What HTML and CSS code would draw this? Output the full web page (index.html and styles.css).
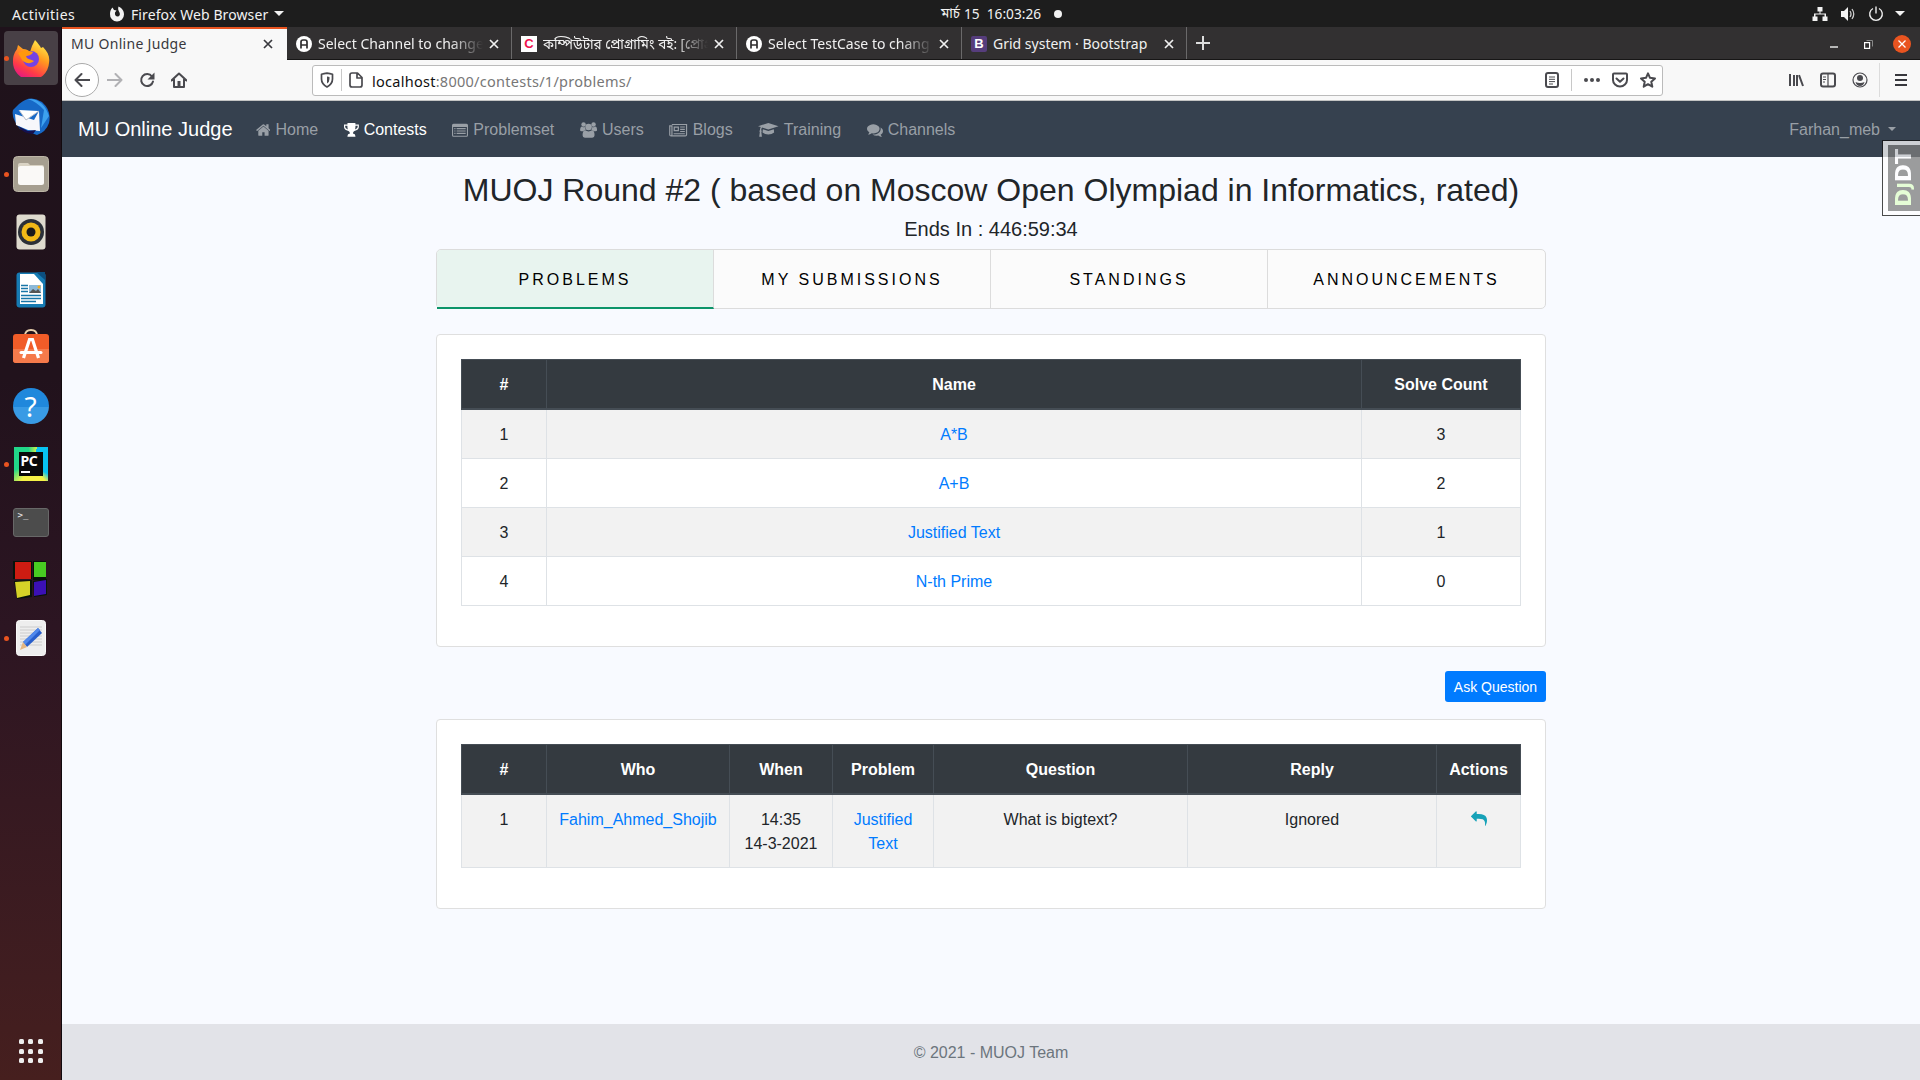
FILE: index.html
```html
<!DOCTYPE html>
<html lang="en">
<head>
<meta charset="utf-8">
<title>MU Online Judge</title>
<link rel="stylesheet" href="styles.css">
</head>
<body>
<header class="topbar">
  <span class="activities">Activities</span>
  <svg class="fx-mono" width="16" height="16" viewBox="0 0 16 16"><path d="M8 15.500A7 7 0 0 1 1 8C1 5 2 3 3.500 1.500L5 4L7.500 4.500L6 6.500C5.500 9 7 10.500 8.500 10.500C10.500 10.500 11.500 8.500 10.500 6.500C10 5 8.500 4 9.500.5C13.500 2.500 15 5 15 8.500A7 7 0 0 1 8 15.500Z" fill="#f2f2f2"/></svg>
  <span class="appname">Firefox Web Browser</span>
  <i class="caret-down"></i>
  <div class="clock"><span class="bn month">মার্চ</span><span>15&nbsp; 16:03:26</span><i class="notif"></i></div>
  <div class="status">
    <svg width="16" height="16" viewBox="0 0 16 16" fill="#f2f2f2"><path d="M5.500 1h5v4.500h-2v2h5.500v3h1.500V15h-5v-4.500h2V8.500h-9v2h2V15h-5v-4.500H2v-3h5.500v-2h-2z"/></svg>
    <svg width="16" height="16" viewBox="0 0 16 16"><path d="M1 5h3l4-4v14l-4-4H1z" fill="#f2f2f2"/><path d="M10 5q2 3 0 6M12 3q3.500 5 0 10" fill="none" stroke="#ccc" stroke-width="1.300"/></svg>
    <svg width="16" height="16" viewBox="0 0 16 16"><path d="M5 2.500a6.300 6.300 0 1 0 6 0M8 .5v7" fill="none" stroke="#eee" stroke-width="1.400"/></svg>
    <i class="caret-down"></i>
  </div>
</header>
<div class="desktop">
<aside class="dock">
  <div class="slot active running"><svg width="38" height="38" viewBox="0 0 38 38"><defs><linearGradient id="ff" x1=".8" y1="0" x2=".3" y2="1"><stop offset="0" stop-color="#fff44f"/><stop offset=".4" stop-color="#ff9a1f"/><stop offset=".75" stop-color="#ff3b47"/><stop offset="1" stop-color="#e31587"/></linearGradient></defs><path d="M23 1c3 3 5 6 6 8l2-1c5 5 7 10 6 16a18 18 0 0 1-36-2c0-6 2-9 4-12l1-4 5 4c3 0 5 1 7 3l2-6z" fill="url(#ff)"/><circle cx="19" cy="20" r="8" fill="#7542e5"/><path d="M6 14l7-3 8 2c-1 3-5 4-7 4 1 4 5 3 8 5-4 4-11 2-13-3z" fill="#ff980e"/></svg></div>
  <div class="slot"><svg width="38" height="38" viewBox="0 0 38 38"><path d="M7 7Q18-3 30 5Q40 14 37 26Q34 35 25 38L8 32Q-1 21 1 13z" fill="#1769c7"/><path d="M16 2q15-1 21 17l-8 12 3-18q-7-8-16-11z" fill="#3da1ef"/><path d="M3 17l19 6 5-9 1 20-12-1-12-5z" fill="#f7f7fb"/><path d="M7 13l7 10 13-9" fill="#fff" stroke="#b8bcc8"/><path d="M6 29l10 5 8-1-3 4Q10 36 6 29z" fill="#15104e"/></svg></div>
  <div class="slot running"><svg width="36" height="36" viewBox="0 0 36 36"><rect x=".5" y=".5" width="35" height="35" rx="4" fill="#a69f90" stroke="#bdb6a7"/><path d="M5 9q0-2 2-2h8l2 2h12q2 0 2 2v7H5z" fill="#d9d3c4"/><rect x="5" y="10" width="26" height="19" rx="2.500" fill="#faf9f7"/></svg></div>
  <div class="slot"><svg width="30" height="36" viewBox="0 0 30 36"><rect x=".5" y=".5" width="29" height="35" rx="3" fill="#dedace"/><circle cx="15" cy="18" r="13" fill="#2b3038"/><circle cx="15" cy="18" r="9.500" fill="#f1b917"/><circle cx="15" cy="18" r="4.500" fill="#17191c"/></svg></div>
  <div class="slot"><svg width="30" height="36" viewBox="0 0 30 36"><rect x=".5" y=".5" width="29" height="35" rx="3" fill="#167bb3"/><path d="M4 2h14l9 10v20H4z" fill="#fff"/><path d="M20 0h9v8z" fill="#0b4f80"/><path d="M5 13.500h7M5 16.500h7M5 19.500h7M5 23.500h20M5 26.500h20M5 29.500h15" stroke="#1976a8" stroke-width="1.300"/><rect x="13" y="13" width="12" height="8" fill="#8cb9d8"/><path d="M13 21l4-4 3 2 2-2 3 4z" fill="#555"/><circle cx="23" cy="15" r="1.500" fill="#f9ad16"/></svg></div>
  <div class="slot software"><svg width="36" height="36" viewBox="0 0 36 36"><path d="M12 7q0-6 6-6t6 6" fill="none" stroke="#ead2ae" stroke-width="1.800"/><rect y="5" width="36" height="29" rx="3" fill="#f15c28"/><path d="M0 20h36v11q0 3-3 3H3q-3 0-3-3z" fill="#f57a4b"/><path d="M10.500 29L16.500 10.500h3L25.500 29" fill="none" stroke="#fff" stroke-width="3.200"/><path d="M8 23.500h20" stroke="#fff" stroke-width="3" stroke-linecap="round"/></svg></div>
  <div class="slot"><div class="help">?</div></div>
  <div class="slot running"><div class="pycharm"><div class="pc-core">PC<i></i></div></div></div>
  <div class="slot"><div class="terminal">&gt;_</div></div>
  <div class="slot"><svg width="36" height="38" viewBox="0 0 36 38"><path d="M0 0h19v18H0zM20 0h13v19H20zM1 20l18-1v17L4 38zM20 20l14-2v16l-13 2z" fill="#07120a"/><path d="M2 1h16v17H2z" fill="#ce1c12"/><path d="M21 1h12v15H21z" fill="#48cc22"/><path d="M2 21l15-1v14L4 37z" fill="#d6d228"/><path d="M21 21l12-2v14l-12 2z" fill="#3b10b5"/></svg></div>
  <div class="slot running"><svg width="30" height="36" viewBox="0 0 30 36"><rect x=".5" y=".5" width="29" height="35" rx="3" fill="#eee" stroke="#f9f9f9"/><path d="M4 7h22M4 10h22M4 13h22M4 16h22M4 19h22M4 22h22M4 25h22" stroke="#ccc"/><path d="M22 8l4 5-15 14-4-5z" fill="#285ecb"/><path d="M22 8l2 2-15 15-2-3z" fill="#5088ec"/><path d="M7 22l4 5-7 3z" fill="#e4b681"/></svg></div>
  <div class="apps"><i></i><i></i><i></i><i></i><i></i><i></i><i></i><i></i><i></i></div>
</aside>
<div class="window">
  <div class="tabstrip">
    <div class="tab current"><span class="tt">MU Online Judge</span><svg class="x" viewBox="0 0 10 10"><path d="M1 1l8 8M9 1l-8 8"/></svg></div>
    <div class="tab"><svg class="fav" viewBox="0 0 16 16"><circle cx="8" cy="8" r="8" fill="#fff"/><path d="M5 12.500V6q0-2 2-2h2q2 0 2 2v6.500M5 9h6" fill="none" stroke="#302e2f" stroke-width="1.700"/></svg><span class="tt fade">Select Channel to change</span><svg class="x" viewBox="0 0 10 10"><path d="M1 1l8 8M9 1l-8 8"/></svg></div>
    <div class="tab"><span class="fav fav-c">C</span><span class="tt fade bn">কম্পিউটার প্রোগ্রামিং বই: [প্রোগ্রা</span><svg class="x" viewBox="0 0 10 10"><path d="M1 1l8 8M9 1l-8 8"/></svg></div>
    <div class="tab"><svg class="fav" viewBox="0 0 16 16"><circle cx="8" cy="8" r="8" fill="#fff"/><path d="M5 12.500V6q0-2 2-2h2q2 0 2 2v6.500M5 9h6" fill="none" stroke="#302e2f" stroke-width="1.700"/></svg><span class="tt fade">Select TestCase to chang</span><svg class="x" viewBox="0 0 10 10"><path d="M1 1l8 8M9 1l-8 8"/></svg></div>
    <div class="tab"><span class="fav fav-b">B</span><span class="tt">Grid system · Bootstrap</span><svg class="x" viewBox="0 0 10 10"><path d="M1 1l8 8M9 1l-8 8"/></svg></div>
    <svg class="plus" width="14" height="14" viewBox="0 0 14 14"><path d="M7 0v14M0 7h14" stroke="#ddd" stroke-width="2"/></svg>
    <div class="controls">
      <svg width="8" height="12" viewBox="0 0 8 12"><path d="M0 9h8" stroke="#fff" stroke-width="1.300"/></svg>
      <svg width="9" height="9" viewBox="0 0 9 9"><path d="M.6 2.600h5v5.800h-5z" fill="none" stroke="#fff" stroke-width="1.200"/><path d="M2.500.5h6v6" fill="none" stroke="#888"/></svg>
      <svg width="18" height="18" viewBox="0 0 18 18"><circle cx="9" cy="9" r="9" fill="#e95420"/><path d="M5.500 5.500l7 7M12.500 5.500l-7 7" stroke="#fff" stroke-width="1.300"/></svg>
    </div>
  </div>
  <div class="toolbar">
    <div class="navbtns">
      <span class="back"><svg width="16" height="16" viewBox="0 0 16 16"><path d="M15.500 8H1.500M7.500 2l-6 6 6 6" class="ln"/></svg></span>
      <svg width="16" height="16" viewBox="0 0 16 16" opacity=".4"><path d="M.5 8h14M8.500 2l6 6-6 6" class="ln"/></svg>
      <svg width="16" height="16" viewBox="0 0 16 16"><path d="M13 4.500A6 6 0 1 0 14 9.500" class="ln"/><path d="M15.500.5v7h-7z" fill="#4a4a4f"/></svg>
      <svg width="16" height="16" viewBox="0 0 16 16"><path d="M.5 8.500L8 1.500l7.500 7M3 7.500V15h10V7.500" class="ln"/><path d="M6.500 9h3v6h-3z" fill="#4a4a4f"/></svg>
    </div>
    <div class="urlbar">
      <svg width="14" height="16" viewBox="0 0 14 16"><path d="M7 1.200q3 .3 5.500 1v4.800Q12.500 12 7 15Q1.500 12 1.500 7V2.200Q4 1.500 7 1.200z" class="ln thin"/><path d="M7 4.500q1.500 0 2.500.5v2q0 3-2.500 4.500z" fill="#4a4a4f"/></svg>
      <i class="sep"></i>
      <svg width="14" height="16" viewBox="0 0 14 16"><path d="M3 1h5.500L13 5.500V13q0 2-2 2H3q-2 0-2-2V3q0-2 2-2zM8 1v5h5" class="ln thin"/></svg>
      <span class="url"><b>localhost</b>:8000/contests/1/problems/</span>
      <div class="urlicons">
        <svg width="14" height="16" viewBox="0 0 14 16"><rect x="1" y="1" width="12" height="14" rx="2" class="ln"/><path d="M4 5h6M4 7.300h6M4 9.600h6M4 12h4" stroke="#4a4a4f"/></svg>
        <i class="sep"></i>
        <svg width="16" height="16" viewBox="0 0 16 16" fill="#4a4a4f"><circle cx="2" cy="8" r="2"/><circle cx="8" cy="8" r="2"/><circle cx="14" cy="8" r="2"/></svg>
        <svg width="16" height="16" viewBox="0 0 16 16"><path d="M1 2.500q0-1 1-1h12q1 0 1 1V8a7 6.500 0 0 1-14 0zM4.500 6.500L8 9.800l3.500-3.300" class="ln"/></svg>
        <svg width="16" height="16" viewBox="0 0 16 16"><path d="M8 1.300l2 4.500 5 .6-3.700 3.300 1 5L8 12.200l-4.300 2.500 1-5L1 6.400l5-.6z" class="ln"/></svg>
      </div>
    </div>
    <div class="rightbtns">
      <svg width="16" height="16" viewBox="0 0 16 16"><path d="M2 2v12M6 3v11M9 3v11M11 3.200L15 14" fill="none" stroke="#4a4a4f" stroke-width="2"/></svg>
      <svg width="16" height="16" viewBox="0 0 16 16"><rect x="1" y="1.500" width="14" height="13" rx="2" class="ln"/><path d="M8 2v12M3 5h3M3 7.500h3M3 10h2" stroke="#4a4a4f" stroke-width="1.200"/></svg>
      <svg width="16" height="16" viewBox="0 0 16 16"><circle cx="8" cy="8" r="7" class="ln hair"/><circle cx="8" cy="6" r="3" fill="#4a4a4f"/><path d="M3.500 10q4.500 2 9 0-1 4-4.500 4t-4.500-4z" fill="#4a4a4f"/></svg>
      <i class="sep tall"></i>
      <svg width="14" height="14" viewBox="0 0 14 14"><path d="M1 2h12M1 7h12M1 12h12" stroke="#38383d" stroke-width="2"/></svg>
    </div>
  </div>
  <div class="page">
    <nav class="navbar">
      <span class="brand">MU Online Judge</span>
      <a><svg width="14.860" height="16" viewBox="64 0 1664 1792"><path d="M1472 992v480q0 26-19 45t-45 19h-384v-384h-256v384h-384q-26 0-45-19t-19-45v-480q0-1 .5-3t.5-3l575-474 575 474q1 2 1 6zm223-69l-62 74q-8 9-21 11h-3q-13 0-21-7l-692-577-692 577q-12 8-24 7-13-2-21-11l-62-74q-8-10-7-23.500t11-21.500l719-599q32-26 76-26t76 26l244 204v-195q0-14 9-23t23-9h192q14 0 23 9t9 23v408l219 182q10 8 11 21.500t-7 23.500z"/></svg>Home</a>
      <a class="on"><svg width="14.860" height="16" viewBox="0 0 15 16"><path d="M3.500 1h8v1.500H15V5q0 3-4.500 4Q9 10 9 11.500q2.500.5 2.500 2.500v.8h-8V14q0-2 2.500-2.500Q6 10 4.500 9 0 8 0 5V2.500h3.500zM1.200 3.700V5q0 1.500 2.700 2.500-.5-1.500-.5-3.800zM13.800 3.700h-2.200q0 2.300-.5 3.800Q13.800 6.500 13.800 5z" fill-rule="evenodd"/></svg>Contests</a>
      <a><svg width="16" height="16" viewBox="0 0 16 16"><path d="M1.500 1.800h13q1.500 0 1.500 1.500v10q0 1.500-1.500 1.500h-13Q0 14.800 0 13.300v-10q0-1.500 1.500-1.500zM1.100 5v8.200q0 .5.500.5h12.800q.5 0 .5-.5V5zM2.300 6h1.200v1.200H2.300zM4.600 6h9.100v1.200H4.600zM2.300 8.400h1.200v1.200H2.300zM4.600 8.400h9.100v1.200H4.600zM2.300 10.800h1.200V12H2.300zM4.600 10.800h9.100V12H4.600z" fill-rule="evenodd"/></svg>Problemset</a>
      <a><svg width="17.140" height="16" viewBox="0 0 17 16"><circle cx="3.500" cy="2.500" r="2.200"/><circle cx="13.500" cy="2.500" r="2.200"/><circle cx="8.500" cy="5" r="3.300"/><path d="M1.500 4.500q2 1.300 3.300.2Q4.800 7 5.800 8 4 8 3.200 9.200H1.500Q0 9.200 0 8q0-3 1.500-3.500zM15.500 4.500q-2 1.300-3.300.2Q12.200 7 11.200 8q1.800 0 2.600 1.200h1.700Q17 9.200 17 8q0-3-1.500-3.500zM5 8.300q3.500 2.200 7 0 2.500.7 2.500 5 0 2.400-2.300 2.400H4.800q-2.300 0-2.300-2.400 0-4.300 2.500-5z"/></svg>Users</a>
      <a><svg width="18.300" height="16" viewBox="0 0 18 16"><path d="M2.700 2.500h14.700v10.200q0 1.200-1.200 1.200H1.900q-1.300 0-1.300-1.200V3.800h2.200v9q0 1-.9 1" fill="none" stroke="currentColor" stroke-width="1.200"/><path d="M4.500 4.500h5.300v4.800H4.500zM5.700 5.700v2.400h2.900V5.700zM11 4.500h4.700v1.100H11zM11 6.800h4.700v1.100H11zM11 9h4.700v1.100H11zM4.500 11.200h11.200v1.100H4.500z" fill-rule="evenodd"/></svg>Blogs</a>
      <a><svg width="20.570" height="16" viewBox="0 0 20.500 16"><path d="M10.300 1L20.500 4.200 10.300 7.500 4 5.500Q3.200 6.500 3.200 8.200q1 .8.100 1.700l.6 4.900H1.200l.6-4.900q-.9-1 .1-1.700 0-1.900.8-3.200L0 4.200zM4.800 7.200l5.500 1.700 5.500-1.700.3 3.300q-2.300 2-5.800 2t-5.800-2z"/></svg>Training</a>
      <a><svg width="16" height="16" viewBox="0 0 1792 1792"><path d="M1408 768q0 139-94 257t-256.500 186.500-353.500 68.500q-86 0-176-16-124 88-278 128-36 9-86 16h-3q-11 0-20.500-8t-11.500-21q-1-3-1-6.500t.5-6.500 2-6l2.500-5 3.500-5.500 4-5 4.500-5 4-4.500q5-6 23-25t26-29.500 22.500-29 25-38.500 20.500-44q-124-72-195-177t-71-224q0-139 94-257t256.500-186.500 353.500-68.500 353.500 68.500 256.500 186.500 94 257zm384 256q0 120-71 224.500t-195 176.500q10 24 20.500 44t25 38.500 22.500 29 26 29.500 23 25q1 1 4 4.500t4.500 5 4 5 3.500 5.500l2.500 5 2 6 .5 6.500-1 6.500q-3 14-13 22t-22 7q-50-7-86-16-154-40-278-128-90 16-176 16-271 0-472-132 58 4 88 4 161 0 309-45t264-129q125-92 192-212t67-254q0-77-23-152 129 71 204 178t75 230z"/></svg>Channels</a>
      <a class="user">Farhan_meb<i class="drop"></i></a>
    </nav>
    <main class="container">
      <h2>MUOJ Round #2 ( based on Moscow Open Olympiad in Informatics, rated)</h2>
      <h5>Ends In : 446:59:34</h5>
      <div class="menu">
        <a class="sel">PROBLEMS</a><a>MY SUBMISSIONS</a><a>STANDINGS</a><a>ANNOUNCEMENTS</a>
      </div>
      <section class="card">
        <table>
          <colgroup><col class="c-num"><col><col class="c-solve"></colgroup>
          <thead><tr><th>#</th><th>Name</th><th>Solve Count</th></tr></thead>
          <tbody>
            <tr><td>1</td><td><a>A*B</a></td><td>3</td></tr>
            <tr><td>2</td><td><a>A+B</a></td><td>2</td></tr>
            <tr><td>3</td><td><a>Justified Text</a></td><td>1</td></tr>
            <tr><td>4</td><td><a>N-th Prime</a></td><td>0</td></tr>
          </tbody>
        </table>
      </section>
      <div class="ask"><button>Ask Question</button></div>
      <section class="card">
        <table>
          <colgroup><col class="c-num"><col class="c-who"><col class="c-when"><col class="c-prob"><col class="c-ques"><col class="c-reply"><col></colgroup>
          <thead><tr><th>#</th><th>Who</th><th>When</th><th>Problem</th><th>Question</th><th>Reply</th><th>Actions</th></tr></thead>
          <tbody><tr><td>1</td><td><a>Fahim_Ahmed_Shojib</a></td><td>14:35<br>14-3-2021</td><td><a>Justified<br>Text</a></td><td>What is bigtext?</td><td>Ignored</td><td><svg class="reply" width="16" height="16" viewBox="0 0 1792 1792"><path d="M1792 1120q0 166-127 451-3 7-10.500 24t-13.500 30-13 22q-12 17-28 17-15 0-23.500-10t-8.500-25q0-9 2.500-26.500t2.500-23.500q5-68 5-123 0-420-270-531-180-67-444-67h-224v256q0 26-19 45t-45 19-45-19l-512-512q-19-19-19-45t19-45l512-512q19-19 45-19t45 19 19 45v256h224q713 0 875 403 53 134 53 333z" fill="#17a2b8"/></svg></td></tr></tbody>
        </table>
      </section>
    </main>
    <footer>© 2021 - MUOJ Team</footer>
    <div class="djdt"><div class="djdt-in"><span><em>D<small>J</small></em>DT</span></div></div>
  </div>
</div>
</div>
</body>
</html>
```

FILE: styles.css
```css
* { box-sizing: border-box; }
body {
  margin: 0; width: 1920px; height: 1080px; overflow: hidden;
  display: flex; flex-direction: column;
  font-family: "Liberation Sans", Arial, sans-serif; font-size: 16px; line-height: 1.5; color: #212529;
}
svg { display: block; flex: none; }
.bn { font-family: "Noto Sans", "Noto Sans Bengali", sans-serif; }

/* desktop top bar */
.topbar {
  height: 27px; background: #1d1d1d; color: #f2f2f2; flex: none;
  display: flex; align-items: center; position: relative; padding-left: 12px;
  font: 14px/27px "Noto Sans", sans-serif; white-space: nowrap;
}
.activities { width: 97px; letter-spacing: .5px; padding-top: 1px; }
.appname { margin-left: 6px; width: 138px; padding-top: 1px; letter-spacing: .1px; }
.caret-down { border: 5px solid transparent; border-top: 5px solid #f2f2f2; border-bottom: 0; margin-left: 5px; }
.clock { position: absolute; left: 941px; top: 0; display: flex; align-items: center; font-size: 13.700px; }
.month { width: 23px; font-size: 13.500px; }
.notif { width: 8px; height: 8px; border-radius: 50%; background: #f2f2f2; margin-left: 13px; }
.status { margin-left: auto; display: flex; align-items: center; gap: 12px; padding-right: 15px; }
.status .caret-down { margin-left: -1px; }

.desktop { display: flex; flex: 1; min-height: 0; }

/* launcher */
.dock {
  width: 62px; flex: none; padding-top: 2px; display: flex; flex-direction: column; align-items: center;
  background: linear-gradient(#1f121b 0, #21121c 350px, #2c1522 600px, #401d20 950px, #461f1e 100%);
  border-right: 1px solid #120a0e;
}
.slot { width: 54px; height: 58px; display: flex; align-items: center; justify-content: center; position: relative; }
.slot.active { isolation: isolate; }
.slot.active::before { content: ""; position: absolute; inset: 2px 0; border-radius: 4px; background: #484046; z-index: -1; }
.slot.running::after { content: ""; position: absolute; left: 0; top: 27px; width: 5px; height: 5px; border-radius: 50%; background: #e95420; }
.slot.software { padding-bottom: 2px; }
.help { width: 36px; height: 36px; border-radius: 50%; background: linear-gradient(#2088dc 52%, #399be5 52%); color: #fff; font: 28px/36px "Noto Sans", sans-serif; text-align: center; }
.pycharm { width: 34px; height: 34px; padding: 5px; background: conic-gradient(from 20deg, #07c3f2 0 100deg, #f5f246 120deg 190deg, #21d789 230deg 330deg, #c8f04d 360deg); }
.pc-core { width: 24px; height: 24px; background: #0a0a0a; color: #fff; font: bold 14px/17px "Noto Sans", sans-serif; padding-left: 2px; letter-spacing: -.5px; }
.pc-core i { display: block; width: 9px; height: 2px; background: #fff; margin-top: 2px; }
.terminal { width: 36px; height: 29px; border: 1px solid #686868; border-radius: 3px; background: #4c4c4c; color: #eee; font: 9px/12px "DejaVu Sans Mono", monospace; padding-left: 4px; }
.apps { margin-top: auto; margin-bottom: 17px; display: grid; grid-template-columns: repeat(3, 5px); gap: 4.500px; }
.apps i { width: 5px; height: 5px; border-radius: 1.500px; background: #eee; }

/* browser chrome */
.window { flex: 1; min-width: 0; display: flex; flex-direction: column; }
.tabstrip { height: 33px; flex: none; display: flex; background: #323031; border-bottom: 1px solid #171616; align-items: stretch; }
.tab { width: 225px; display: flex; align-items: center; padding: 1px 12px 0 9px; gap: 6px; color: #f0f0f0; border-right: 1px solid #6a696a; font: 14px/20px "Noto Sans", sans-serif; white-space: nowrap; }
.tab.current { height: 33px; background: #f8f8f8; color: #38383d; border-top: 2px solid #e95420; border-right: 0; padding: 0 14px 2px 9px; letter-spacing: .3px; }
.tt { flex: 1; overflow: hidden; }
.tt.bn { font-size: 13.500px; }
.fade { -webkit-mask-image: linear-gradient(90deg, #000 80%, transparent); mask-image: linear-gradient(90deg, #000 80%, transparent); }
.x { width: 10px; height: 10px; stroke: currentColor; stroke-width: 1.700; }
.fav { width: 16px; height: 16px; flex: none; font: bold 13px/16px "Liberation Sans", sans-serif; text-align: center; }
.fav-c { background: #fff; color: #f0134d; }
.fav-b { background: #563d7c; color: #fff; border-radius: 2px; }
.plus { margin: 9px 0 0 9px; }
.controls { margin-left: auto; display: flex; align-items: center; gap: 20px; padding: 2px 9px 0 0; }
.controls svg:first-child { margin-right: 6px; }
.toolbar { height: 41px; flex: none; display: flex; align-items: center; background: #f8f8f8; border-bottom: 1px solid #c4c4c4; padding: 0 12px 0 3px; }
.ln { fill: none; stroke: #4a4a4f; stroke-width: 2; stroke-linecap: round; stroke-linejoin: round; }
.ln.thin { stroke-width: 1.700; }
.ln.hair { stroke-width: 1.200; }
.navbtns { display: flex; align-items: center; gap: 16px; width: 247px; }
.back { width: 34px; height: 34px; margin-right: -8px; border: 1px solid #aaa; border-radius: 50%; background: #fff; display: flex; align-items: center; justify-content: center; }
.urlbar { width: 1351px; height: 31px; border: 1px solid #bbb; border-radius: 3px; background: #fff; display: flex; align-items: center; padding: 0 6px 0 7px; gap: 7px; }
.sep { width: 1px; height: 22px; background: #c8c8c8; }
.sep.tall { height: 34px; background: #dcdcdc; }
.url { font: 14.500px/20px "Noto Sans", sans-serif; letter-spacing: .27px; color: #777; margin-left: 2px; padding-top: 1px; }
.url b { font-weight: normal; color: #111; }
.urlicons { margin-left: auto; display: flex; align-items: center; gap: 12px; }
.rightbtns { margin-left: auto; display: flex; align-items: center; gap: 16px; }
.rightbtns .sep { margin: 0 -2px 0 -5px; }

/* web page */
.page { flex: 1; min-height: 0; background: #f8faff; position: relative; display: flex; flex-direction: column; }
.navbar { height: 56px; flex: none; background: #36414f; display: flex; align-items: center; padding: 0 24px 0 16px; color: #999fa6; }
.brand { color: #fff; font-size: 20px; margin-right: 23px; }
.navbar a { display: flex; align-items: center; gap: 5.100px; margin-right: 25.500px; padding-top: 2px; }
.navbar a svg { fill: currentColor; margin-top: -1px; }
.navbar a.on { color: #fff; }
.navbar a.user { margin: 0 0 0 auto; gap: 8px; }
.drop { border: 4.500px solid transparent; border-top-color: currentColor; border-bottom: 0; margin-top: -2px; }
.container { width: 1110px; margin: 0 auto; padding-top: 13.600px; flex: 1; }
h2, h5 { font-weight: normal; line-height: 1.2; margin: 0 0 8px; text-align: center; white-space: nowrap; }
h2 { font-size: 32px; }
h5 { font-size: 20px; }
.menu { display: grid; grid-template-columns: repeat(4, 1fr); height: 60px; border: 1px solid #dcdcdc; border-radius: 5px; background: #fbfbfb; }
.menu a { display: flex; align-items: center; justify-content: center; color: #000; letter-spacing: 3px; border-right: 1px solid #dcdcdc; padding-top: 2px; }
.menu a:last-child { border-right: 0; }
.menu a.sel { background: #e8f4ef; height: 59px; border-bottom: 2px solid #0c9469; border-radius: 4px 0 0 0; padding-top: 3px; }
.card { background: #fff; border: 1px solid #dfdfdf; border-radius: 4px; padding: 24px 24px 40px; }
.menu + .card { margin-top: 25px; }
table { width: 1060px; table-layout: fixed; border-collapse: collapse; text-align: center; }
th, td { padding: 13px 0 11px; border: 1px solid #dee2e6; vertical-align: top; line-height: 24px; }
thead th { background: #343a40; color: #fff; border-color: #454d55; border-bottom-width: 2px; }
tbody tr:nth-child(odd) { background: #f2f2f2; }
table a { color: #007bff; }
.c-num { width: 85px; }
.c-solve { width: 159px; }
.c-who { width: 183px; }
.c-when { width: 103px; }
.c-prob { width: 101px; }
.c-ques { width: 254px; }
.c-reply { width: 249px; }
.reply { margin: 3px auto 0; }
.ask { display: flex; justify-content: flex-end; margin: 24px 0 17px; }
button { width: 101px; height: 31px; padding: 1px 0 0; border: 0; border-radius: 3px; background: #007bff; color: #fff; font: 14px/30px "Liberation Sans", sans-serif; }
footer { height: 56px; flex: none; background: #e2e3e8; color: #6c757d; display: flex; align-items: center; justify-content: center; padding-top: 2px; }
.djdt { position: absolute; right: 0; top: 39px; width: 38px; height: 76px; opacity: .75; background: #fff; border: 1px solid #111; border-right: 0; padding: 4px 0 4px 5px; }
.djdt-in { height: 66px; background: #7d7d7d; display: flex; align-items: center; justify-content: center; }
.djdt span { writing-mode: vertical-rl; transform: rotate(180deg); color: #fff; font: bold 22px/30px "DejaVu Sans", sans-serif; }
.djdt em { font-style: normal; color: #dfffc9; }
.djdt small { font-size: 17px; }
```
